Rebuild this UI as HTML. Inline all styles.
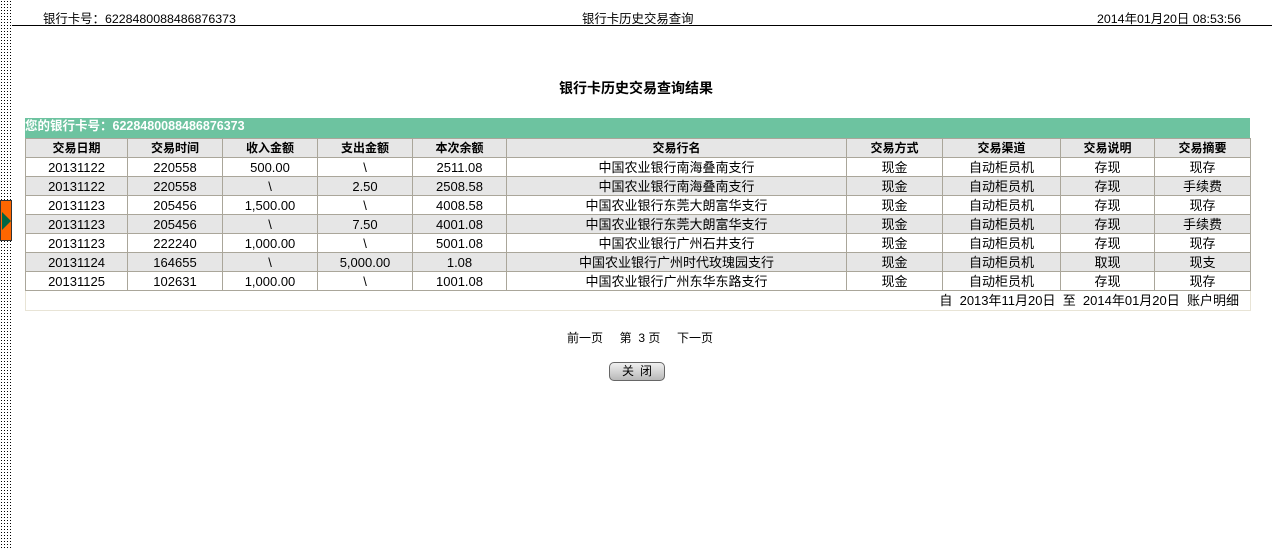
<!DOCTYPE html>
<html><head><meta charset="utf-8"><style>
*{margin:0;padding:0;box-sizing:border-box}
body{width:1280px;height:548px;background:#fff;font-family:"Liberation Sans","Noto Sans CJK SC",sans-serif;font-size:12px;color:#000;position:relative;overflow:hidden}
.strip{position:absolute;left:0;top:0;width:12px;height:548px;background-image:radial-gradient(#000 0.6px,transparent 0.7px);background-size:3px 3px;background-color:#fff}
.tab{position:absolute;left:0;top:200px;width:12px;height:41px;background:#f60;border:1px solid #333}
.tab:after{content:"";position:absolute;left:1px;top:11px;border-left:9px solid #064;border-top:9px solid transparent;border-bottom:9px solid transparent}
.t{position:absolute;top:9px;font-size:12.4px}
.line{position:absolute;left:12px;top:25px;width:1260px;height:1px;background:#000}
h1{position:absolute;top:78px;left:-4px;width:1280px;text-align:center;font-size:14px;font-weight:bold}
.bar{position:absolute;left:25px;top:118px;width:1225px;height:20px;background:#6dc3a0;color:#fff;font-weight:bold;font-size:12.5px;line-height:16px}
table{position:absolute;left:25px;top:138px;width:1225px;border-collapse:collapse;table-layout:fixed}
td,th{border:1px solid #aaa69a;height:19px;text-align:center;font-size:13px;padding:0;white-space:nowrap;line-height:17px}
th{background:#e6e6e6;font-weight:bold;height:19px;font-size:12px}
tr.g td{background:#e6e6e6}
tr.f td{height:20px;text-align:right;padding-right:11px;border-color:#e8e4d6}
.nav{position:absolute;top:329px;left:567px;font-size:12px}
.btn{position:absolute;left:609px;top:362px;width:56px;height:19px;border:1px solid #666;border-radius:5px;background:linear-gradient(#f0f0f0,#b8b8b8);text-align:center;font-size:12px;line-height:17px;letter-spacing:6px;padding-left:6px}
</style></head><body>
<div class="strip"></div><div class="tab"></div>
<div class="t" style="left:43px">银行卡号：6228480088486876373</div>
<div class="t" style="left:582px">银行卡历史交易查询</div>
<div class="t" style="left:1097px">2014年01月20日 08:53:56</div>
<div class="line"></div>
<h1>银行卡历史交易查询结果</h1>
<div class="bar">您的银行卡号：6228480088486876373</div>
<table>
<colgroup><col style="width:102px"><col style="width:95px"><col style="width:95px"><col style="width:95px"><col style="width:94px"><col style="width:340px"><col style="width:96px"><col style="width:118px"><col style="width:94px"><col style="width:96px"></colgroup>
<tr><th>交易日期</th><th>交易时间</th><th>收入金额</th><th>支出金额</th><th>本次余额</th><th>交易行名</th><th>交易方式</th><th>交易渠道</th><th>交易说明</th><th>交易摘要</th></tr>
<tr><td>20131122</td><td>220558</td><td>500.00</td><td>\</td><td>2511.08</td><td>中国农业银行南海叠南支行</td><td>现金</td><td>自动柜员机</td><td>存现</td><td>现存</td></tr>
<tr class="g"><td>20131122</td><td>220558</td><td>\</td><td>2.50</td><td>2508.58</td><td>中国农业银行南海叠南支行</td><td>现金</td><td>自动柜员机</td><td>存现</td><td>手续费</td></tr>
<tr><td>20131123</td><td>205456</td><td>1,500.00</td><td>\</td><td>4008.58</td><td>中国农业银行东莞大朗富华支行</td><td>现金</td><td>自动柜员机</td><td>存现</td><td>现存</td></tr>
<tr class="g"><td>20131123</td><td>205456</td><td>\</td><td>7.50</td><td>4001.08</td><td>中国农业银行东莞大朗富华支行</td><td>现金</td><td>自动柜员机</td><td>存现</td><td>手续费</td></tr>
<tr><td>20131123</td><td>222240</td><td>1,000.00</td><td>\</td><td>5001.08</td><td>中国农业银行广州石井支行</td><td>现金</td><td>自动柜员机</td><td>存现</td><td>现存</td></tr>
<tr class="g"><td>20131124</td><td>164655</td><td>\</td><td>5,000.00</td><td>1.08</td><td>中国农业银行广州时代玫瑰园支行</td><td>现金</td><td>自动柜员机</td><td>取现</td><td>现支</td></tr>
<tr><td>20131125</td><td>102631</td><td>1,000.00</td><td>\</td><td>1001.08</td><td>中国农业银行广州东华东路支行</td><td>现金</td><td>自动柜员机</td><td>存现</td><td>现存</td></tr>
<tr class="f"><td colspan="10">自&nbsp; 2013年11月20日&nbsp; 至&nbsp; 2014年01月20日&nbsp; 账户明细</td></tr>
</table>
<div class="nav">前一页 &nbsp;&nbsp;&nbsp; 第&nbsp; 3 页 &nbsp;&nbsp;&nbsp; 下一页</div>
<div class="btn">关闭</div>
</body></html>
